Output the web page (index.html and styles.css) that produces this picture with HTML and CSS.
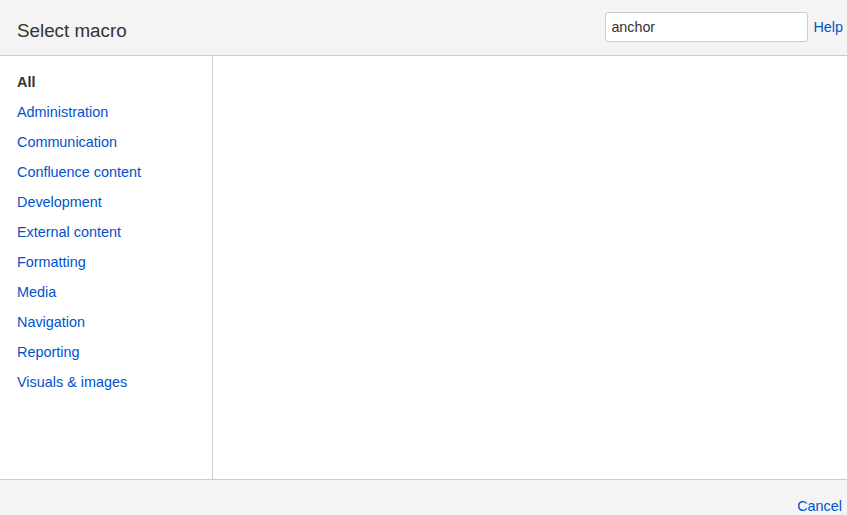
FILE: index.html
```html
<!DOCTYPE html>
<html>
<head>
<meta charset="utf-8">
<link rel="stylesheet" href="styles.css">
</head>
<body>
<div class="dialog">
  <header class="header">
    <h1 class="title">Select macro</h1>
    <div class="tools">
      <input class="search" type="text" value="anchor">
      <a class="link help" href="#">Help</a>
    </div>
  </header>
  <div class="main">
    <nav class="sidebar">
      <ul class="cats">
        <li class="cat active">All</li>
        <li class="cat"><a class="link" href="#">Administration</a></li>
        <li class="cat"><a class="link" href="#">Communication</a></li>
        <li class="cat"><a class="link" href="#">Confluence content</a></li>
        <li class="cat"><a class="link" href="#">Development</a></li>
        <li class="cat"><a class="link" href="#">External content</a></li>
        <li class="cat"><a class="link" href="#">Formatting</a></li>
        <li class="cat"><a class="link" href="#">Media</a></li>
        <li class="cat"><a class="link" href="#">Navigation</a></li>
        <li class="cat"><a class="link" href="#">Reporting</a></li>
        <li class="cat"><a class="link" href="#">Visuals &amp; images</a></li>
      </ul>
    </nav>
    <section class="content"></section>
  </div>
  <footer class="footer">
    <a class="link" href="#">Cancel</a>
  </footer>
</div>
</body>
</html>
```

FILE: styles.css
```css
html, body {
  margin: 0;
  padding: 0;
  height: 100%;
}
body {
  font-family: "Liberation Sans", Arial, sans-serif;
  color: #333;
  background: #fff;
  overflow: hidden;
}
.dialog {
  display: flex;
  flex-direction: column;
  height: 515px;
}
.header {
  height: 55px;
  flex: none;
  background: #f4f4f4;
  border-bottom: 1px solid #ccc;
  display: flex;
  align-items: center;
  justify-content: space-between;
  padding: 0 4px 0 17px;
}
.title {
  margin: 0;
  font-size: 18.8px;
  font-weight: normal;
  color: #333;
  padding-top: 6px;
}
.tools {
  display: flex;
  align-items: center;
  gap: 5px;
  padding-bottom: 2px;
}
.search {
  box-sizing: border-box;
  width: 203px;
  height: 30px;
  border: 1px solid #ccc;
  border-radius: 3px;
  background: #fff;
  padding: 0 5px;
  font-family: "Liberation Sans", Arial, sans-serif;
  font-size: 14.3px;
  color: #333;
  outline: none;
}
.link {
  color: #0052cc;
  text-decoration: none;
  font-size: 14.4px;
}
.main {
  flex: none;
  height: 423px;
  display: flex;
}
.sidebar {
  width: 212px;
  flex: none;
  border-right: 1px solid #ccc;
}
.cats {
  list-style: none;
  margin: 0;
  padding: 11px 0 0 17px;
}
.cat {
  height: 30px;
  line-height: 30px;
  font-size: 14.4px;
}
.cat.active {
  font-weight: bold;
  color: #333;
}
.content {
  flex: 1;
}
.footer {
  flex: 1;
  background: #f4f4f4;
  border-top: 1px solid #ccc;
  display: flex;
  justify-content: flex-end;
  align-items: flex-start;
  padding: 18px 5px 0 0;
}
```
